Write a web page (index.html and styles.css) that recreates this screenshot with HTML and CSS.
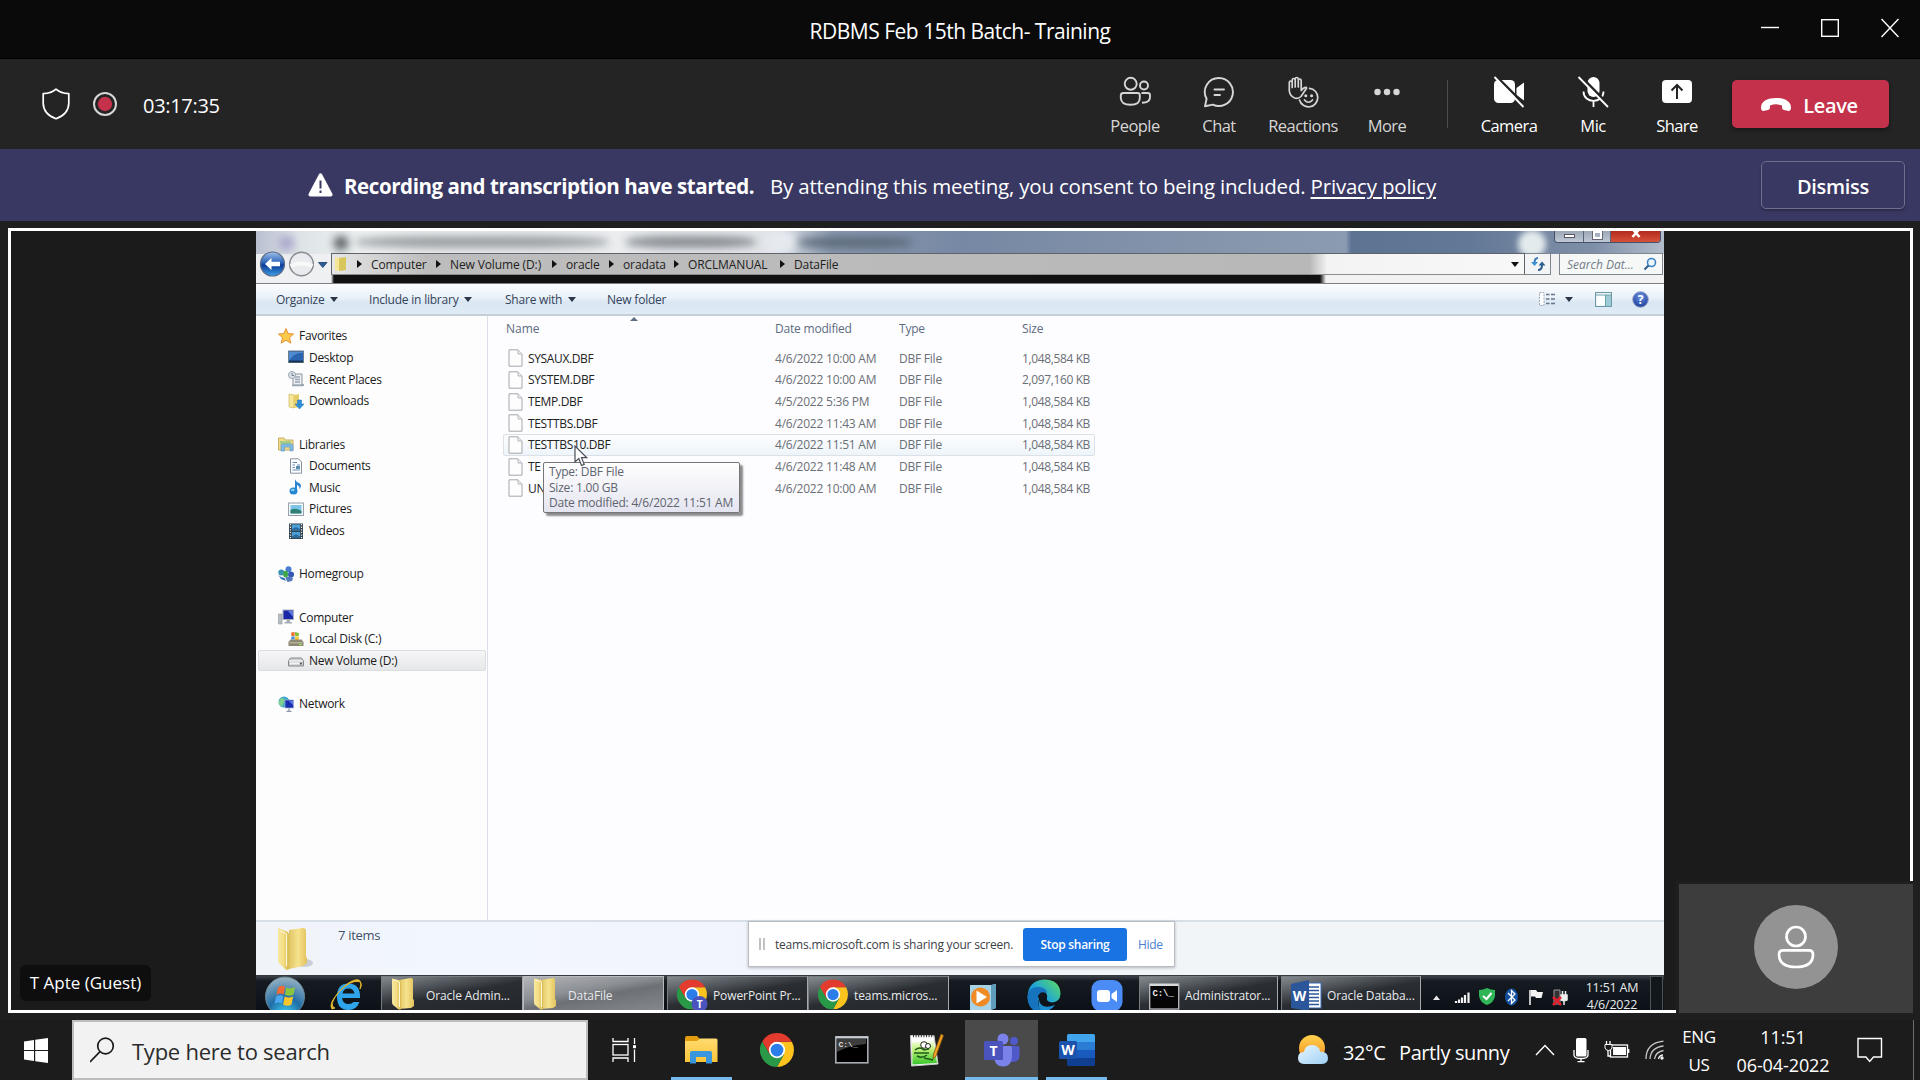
FILE: index.html
```html
<!DOCTYPE html>
<html lang="en">
<head>
<meta charset="utf-8">
<title>RDBMS Feb 15th Batch- Training</title>
<link rel="stylesheet" href="styles.css">
</head>
<body>
<svg class="defs" width="0" height="0" aria-hidden="true">
  <defs>
    <linearGradient id="gFold" x1="0" x2="1"><stop offset="0" stop-color="#f7e9a0"/><stop offset=".5" stop-color="#f3dc84"/><stop offset="1" stop-color="#d9b94e"/></linearGradient>
    <linearGradient id="gFold2" x1="0" x2="1"><stop offset="0" stop-color="#e0c463"/><stop offset=".5" stop-color="#f6e28e"/><stop offset="1" stop-color="#e3c25c"/></linearGradient>
    <radialGradient id="gOrb" cx=".5" cy=".95" r=".95"><stop offset="0" stop-color="#3fd0f4"/><stop offset=".45" stop-color="#1f6ea8"/><stop offset="1" stop-color="#9db4c2"/></radialGradient>
    <radialGradient id="gHelp" cx=".5" cy=".3" r=".8"><stop offset="0" stop-color="#6d92e6"/><stop offset="1" stop-color="#12318f"/></radialGradient>
    <linearGradient id="gBack" x1="0" x2="0" y1="0" y2="1"><stop offset="0" stop-color="#9fc0ea"/><stop offset=".45" stop-color="#2a62b8"/><stop offset=".55" stop-color="#0d3c96"/><stop offset="1" stop-color="#3ba0e8"/></linearGradient>
    <linearGradient id="gEdge" x1="0" y1="1" x2="1" y2="0"><stop offset="0" stop-color="#0c59a4"/><stop offset=".5" stop-color="#1fa3d8"/><stop offset="1" stop-color="#5ee05a"/></linearGradient>
    <linearGradient id="gSun" x1="0" x2="0" y1="0" y2="1"><stop offset="0" stop-color="#ffd34e"/><stop offset="1" stop-color="#f28a1c"/></linearGradient>
    <linearGradient id="gCloud" x1="0" x2="1" y1="0" y2="1"><stop offset="0" stop-color="#e8f6ff"/><stop offset="1" stop-color="#9fd0f5"/></linearGradient>
    <linearGradient id="gExp" x1="0" x2="0" y1="0" y2="1"><stop offset="0" stop-color="#ffdb70"/><stop offset="1" stop-color="#fbc437"/></linearGradient>
    <linearGradient id="gNpp" x1="0" x2="0" y1="0" y2="1"><stop offset="0" stop-color="#f4ffe8"/><stop offset=".35" stop-color="#c4f07a"/><stop offset="1" stop-color="#35c52a"/></linearGradient>
    <symbol id="chrome" viewBox="0 0 48 48">
      <path d="M24 12.500H45A24 24 0 0 1 24 48L34 29.500z" fill="#fcc31e"/>
      <path d="M3.200 12 14 30 24 35 34.200 29.500 24 48A24 24 0 0 1 3.200 12z" fill="#2a9947"/>
      <path d="M24 12.500H45A24 24 0 0 0 3.200 12L14 30z" fill="#e33b2e"/>
      <circle cx="24" cy="24" r="11.500" fill="#fff"/><circle cx="24" cy="24" r="9" fill="#2b7de9"/>
    </symbol>
    <symbol id="folder" viewBox="0 0 24 34">
      <path d="M8 3 20 1q2 0 2 2V22l1 1v6l-3 2-12 1z" fill="url(#gFold2)"/>
      <path d="M1 1.500 8 3q2 .5 2 3V32q-1 1.500-3 0L2 28Q1 27 1 25z" fill="url(#gFold)"/>
      <path d="M3 3 8.500 5v25" fill="none" stroke="#fdf8d8" stroke-width="1"/>
    </symbol>
    <symbol id="file" viewBox="0 0 15 18"><path d="M1 .8H10L14 5V17.200H1z" fill="#fdfdfd" stroke="#a3a7aa"/><path d="M10 1V5H14" fill="#eee" stroke="#b5b8ba"/></symbol>
    <symbol id="word" viewBox="0 0 36 34">
      <path d="M8 2.500Q8 1 9.500 1H34.500Q36 1 36 2.500V9H8z" fill="#41a5ee"/><path d="M8 9H36V17H8z" fill="#2b7cd3"/><path d="M8 17H36V25H8z" fill="#185abd"/><path d="M8 25H36V31.500Q36 33 34.500 33H9.500Q8 33 8 31.500z" fill="#103f91"/>
      <rect x="0" y="8" width="18" height="18" rx="1.500" fill="#1b52ac"/>
      <text x="9" y="22" text-anchor="middle" class="logo-letter">W</text>
    </symbol>
  </defs>
</svg>

<header class="titlebar">
  <h1 class="title">RDBMS Feb 15th Batch- Training</h1>
  <div class="win-controls">
    <svg width="18" height="20" viewBox="0 0 18 20"><path d="M0 9.500H18" stroke="#fff" stroke-width="1.400"/></svg>
    <svg width="18" height="20" viewBox="0 0 18 20"><rect x=".7" y="1.700" width="16.600" height="16.600" fill="none" stroke="#fff" stroke-width="1.400"/></svg>
    <svg width="18" height="20" viewBox="0 0 18 20"><path d="M.5 1 17.500 19M17.500 1 .5 19" stroke="#fff" stroke-width="1.400"/></svg>
  </div>
</header>

<section class="meetbar">
  <svg class="shield" width="28" height="32" viewBox="0 0 28 32"><path d="M14 1.200C10.500 4.300 6.500 5.500 1.200 5.700V15C1.200 22.500 6 27.800 14 30.800 22 27.800 26.800 22.500 26.800 15V5.700C21.500 5.500 17.500 4.300 14 1.200z" fill="none" stroke="#fff" stroke-width="1.700" stroke-linejoin="round"/></svg>
  <svg class="rec" width="24" height="24" viewBox="0 0 24 24"><circle cx="12" cy="12" r="11" fill="none" stroke="#d6d6d6" stroke-width="2"/><circle cx="12" cy="12" r="7.200" fill="#c4314b"/></svg>
  <span class="timer">03:17:35</span>
  <div class="actions">
    <div class="action">
      <svg width="32" height="32" viewBox="0 0 32 32" fill="none" stroke="#d6d6d6" stroke-width="1.900"><circle cx="11.700" cy="7.800" r="6"/><circle cx="25" cy="9.500" r="4"/><path d="M4.500 17H18.500Q20.800 17 20.800 19.300V22Q20.800 28.800 11.500 28.800T1.800 22V19.500Q1.800 17 4.500 17z"/><path d="M22.500 17H28.500Q31 17 31 19.300V21Q31 26.800 23 26.800"/></svg>
      <span>People</span>
    </div>
    <div class="action">
      <svg width="32" height="32" viewBox="0 0 32 32" fill="none" stroke="#d6d6d6" stroke-width="1.900"><path d="M16 2A14 14 0 1 1 9.800 28.600L2 30.200 3.600 22.800A14 14 0 0 1 16 2z" stroke-linejoin="round"/><path d="M11.500 13.500H21M11.500 19H17" stroke-linecap="round"/></svg>
      <span>Chat</span>
    </div>
    <div class="action">
      <svg width="32" height="32" viewBox="0 0 32 32" fill="none" stroke="#d6d6d6" stroke-width="1.700" stroke-linecap="round" stroke-linejoin="round"><path d="M7.500 22Q3 20 2.300 15V6.500Q2.300 5 3.700 5T5.200 6.500V11.500 4Q5.200 2.500 6.600 2.500T8.200 4V11 3Q8.200 1.500 9.700 1.500T11.300 3V11 4.500Q11.300 3 12.700 3T14.200 4.500V14.500Q16.500 11 19.300 11.300 20 12 18.500 13.800L14 20.500Q11.500 23 7.500 22z"/><path d="M22.500 12.300A9.300 9.300 0 1 1 12.500 24"/><path d="M17.500 24q4 4.500 8 0"/><circle cx="18.800" cy="19.800" r=".7" fill="#d6d6d6"/><circle cx="24.600" cy="19.800" r=".7" fill="#d6d6d6"/></svg>
      <span>Reactions</span>
    </div>
    <div class="action">
      <svg width="32" height="32" viewBox="0 0 32 32" fill="#d6d6d6"><circle cx="6.500" cy="16" r="3.200"/><circle cx="16" cy="16" r="3.200"/><circle cx="25.500" cy="16" r="3.200"/></svg>
      <span>More</span>
    </div>
    <i class="divider"></i>
    <div class="action on">
      <svg width="32" height="32" viewBox="0 0 32 32"><rect x="1" y="4" width="21" height="23" rx="4.500" fill="#fff"/><path d="M23.500 12 31 6.500V24.500L23.500 19z" fill="#fff"/><path d="M3 0 33 30" stroke="#242424" stroke-width="2.500"/><path d="M1.500 1 30.500 31" stroke="#fff" stroke-width="1.800"/></svg>
      <span>Camera</span>
    </div>
    <div class="action on">
      <svg width="32" height="32" viewBox="0 0 32 32"><rect x="10.500" y="1" width="12" height="20" rx="6" fill="#fff"/><path d="M6.500 15.500C6.500 28 26.500 28 26.500 15.500M16.500 25V31" fill="none" stroke="#fff" stroke-width="1.800"/><path d="M3.500 0 32 29" stroke="#242424" stroke-width="2.500"/><path d="M1.500 1 31 31" stroke="#fff" stroke-width="1.800"/></svg>
      <span>Mic</span>
    </div>
    <div class="action on">
      <svg width="32" height="32" viewBox="0 0 32 32"><rect x="1" y="4" width="30" height="23" rx="4" fill="#fff"/><path d="M16 23V9.500M10.500 14.500 16 9 21.500 14.500" fill="none" stroke="#242424" stroke-width="2"/></svg>
      <span>Share</span>
    </div>
    <button class="leave">
      <svg width="30" height="14" viewBox="0 0 30 14"><path d="M0 9.500C0 3 7 0 15 0S30 3 30 9.500Q30 13.600 26.500 12.800L23 12Q21 11.500 21 9.500V7.500Q15 5 9 7.500V9.500Q9 11.500 7 12L3.500 12.800Q0 13.600 0 9.500z" fill="#fff"/></svg>
      <span>Leave</span>
    </button>
  </div>
</section>

<section class="banner">
  <div class="notice">
    <svg width="25" height="24" viewBox="0 0 25 24"><path d="M10.800 1.500Q12.500-1 14.200 1.500L24.200 20.500Q25.500 23.500 22.500 23.500H2.500Q-.5 23.500.8 20.500z" fill="#fff"/><path d="M12.500 7.500V15.500M12.500 17.500V20" stroke="#393863" stroke-width="2"/></svg>
    <b>Recording and transcription have started.</b>
    <span class="consent">By attending this meeting, you consent to being included. <a>Privacy policy</a></span>
  </div>
  <button class="dismiss">Dismiss</button>
</section>

<main class="stage">
  <div class="frame">
    <div class="screen">
      <div class="glass">
        <div class="blurs">
          <i class="smudge s1"></i><i class="smudge s2"></i><i class="smudge s3"></i><i class="smudge s4"></i><i class="smudge s5"></i><i class="smudge s6"></i><i class="smudge s7"></i>
        </div>
        <div class="captions"><i class="cap cmin"><b></b></i><i class="cap cmax"><b></b></i><i class="cap cx"><svg width="12" height="7" viewBox="0 0 12 7"><path d="M2.500-2 9.500 6M9.500-2 2.500 6" stroke="#fff" stroke-width="2.600"/></svg></i></div>
        <div class="addr-row">
          <svg class="nav" width="74" height="28" viewBox="0 0 74 28"><circle cx="16.500" cy="14" r="12" fill="url(#gBack)" stroke="#5a6b88" stroke-width="1.200"/><path d="M9 14 15.500 8V11.800H24V16.200H15.500V20z" fill="#fff"/><circle cx="45.500" cy="14" r="11.800" fill="#e9ebee" stroke="#8a8d92" stroke-width="1.500"/><path d="M34.500 16q11-5 22 0" fill="none" stroke="#f8f8f8" stroke-width="4"/><path d="M62.500 12.500H71L66.800 17.500z" fill="#2a5f9a" stroke="#1c3c66" stroke-width=".8"/></svg>
          <div class="address">
            <svg width="13" height="16" viewBox="0 0 13 16"><path d="M1 1 5 2V15L1 14z" fill="#f5e69a"/><path d="M5 2 12 1V14L5 15z" fill="#d9c65c"/></svg>
            <i class="sep"></i><span class="c1">Computer</span><i class="sep"></i><span class="c2">New Volume (D:)</span><i class="sep"></i><span class="c3">oracle</span><i class="sep"></i><span class="c4">oradata</span><i class="sep"></i><span class="c5">ORCLMANUAL</span><i class="sep"></i><span>DataFile</span>
            <i class="drop"></i>
          </div>
          <div class="refresh"><svg width="16" height="16" viewBox="0 0 16 16" fill="none" stroke="#3b77b8" stroke-width="2"><path d="M8 2Q4.500 2 4.500 7"/><path d="M1 6H8L4.500 10z" fill="#3b8fd0" stroke="none"/><path d="M8 14Q12 14 12 9" stroke="#2c5f8f"/><path d="M8.500 9.500 12 5.500 15.500 9.500z" fill="#2c5f8f" stroke="none"/></svg></div>
          <div class="search"><em>Search Dat...</em><svg width="14" height="14" viewBox="0 0 14 14"><circle cx="8.500" cy="5.500" r="4" fill="#eaf5ff" stroke="#3f84c0" stroke-width="1.600"/><path d="M5.500 8.500 1.500 12.500" stroke="#2e5c8c" stroke-width="2"/></svg></div>
        </div>
      </div>
      <div class="toolbar">
        <span class="t1">Organize<i class="drop"></i></span><span class="t2">Include in library<i class="drop"></i></span><span class="t3">Share with<i class="drop"></i></span><span>New folder</span>
        <div class="tools">
          <svg width="17" height="14" viewBox="0 0 17 14"><path d="M.5.5H5V13.500H.5z" fill="#fff" stroke="#9aa5b3" stroke-dasharray="2 1.200"/><path d="M7 2.500H10.500M7 7H10.500M7 11.500H10.500M12 2.500H16M12 7H16M12 11.500H16" stroke="#65748a" stroke-width="1.300"/></svg>
          <i class="drop"></i>
          <svg width="17" height="15" viewBox="0 0 17 15"><rect x=".6" y=".6" width="15.800" height="13.800" fill="#fdfefe" stroke="#5c8f9d"/><path d="M11 3H16V14H11z" fill="#9ccbd6"/><path d="M1 3H16M10.500 3V14" stroke="#6fa0ad"/></svg>
          <svg width="17" height="17" viewBox="0 0 17 17"><circle cx="8.500" cy="8.500" r="7.800" fill="url(#gHelp)" stroke="#9aa7c6"/><text x="8.500" y="13" text-anchor="middle" class="qmark">?</text></svg>
        </div>
      </div>
      <div class="explorer">
        <nav class="tree">
          <div class="node top"><svg width="16" height="16" viewBox="0 0 16 16"><path d="M8 .5 10.200 5.600 15.600 6 11.500 9.700 12.800 15.200 8 12.200 3.200 15.200 4.500 9.700.4 6 5.800 5.600z" fill="#fdc94a" stroke="#e08a2c" stroke-width=".9"/></svg>Favorites</div>
          <div class="node"><svg width="16" height="16" viewBox="0 0 16 16"><rect x=".5" y="2" width="15" height="11.500" fill="#2b64b0" stroke="#6f7f92"/><path d="M1 12Q6 3 15 4V3H1z" fill="#4f8bd0"/><path d="M1 12.500H15" stroke="#17304f" stroke-width="1.800"/></svg>Desktop</div>
          <div class="node"><svg width="16" height="16" viewBox="0 0 16 16"><path d="M5 3H14V14H16H5z" fill="#eef1f4" stroke="#8a939c"/><path d="M7 6H12M7 8.500H12M7 11H12M4 14.500H15" stroke="#9aa7b5" stroke-width="1.400"/><circle cx="4" cy="4" r="3.500" fill="#dde6ec" stroke="#98a4ad"/><path d="M4 2V4.500H6" fill="none" stroke="#6b7b8a"/></svg>Recent Places</div>
          <div class="node"><svg width="16" height="16" viewBox="0 0 16 16"><path d="M1 1 6 2V15L1 14z" fill="#f5e69a" stroke="#c9b04f" stroke-width=".6"/><path d="M6 2 11 1V14L6 15z" fill="#e6cd68"/><path d="M9.500 7H13.500V11H16L11.500 16 7 11H9.500z" fill="#2f8fd8" stroke="#1f6fb0" stroke-width=".5"/></svg>Downloads</div>
          <div class="gap"></div>
          <div class="node top"><svg width="16" height="16" viewBox="0 0 16 16"><path d="M.5 2H6L7.500 4H15V14H.5z" fill="#f0d98a" stroke="#c9b266"/><path d="M2 5H13V8H2z" fill="#a5cf87"/><path d="M3 15V9.500Q3 8 4.500 8H13.500Q15 8 15 9.500V15H12V11H6.500V15z" fill="#82bce6" stroke="#5d93bd" stroke-width=".6"/></svg>Libraries</div>
          <div class="node"><svg width="16" height="16" viewBox="0 0 16 16"><path d="M2.500.8H10.500L13.500 4V15.200H2.500z" fill="#fff" stroke="#8792a0"/><path d="M4.500 4.500H9M4.500 7H7M9 7H12M4.500 9.500H7M4.500 12H12" stroke="#5e90c0" stroke-width="1.200"/><path d="M8 8H12V11H8z" fill="#5b8fae"/></svg>Documents</div>
          <div class="node"><svg width="16" height="16" viewBox="0 0 16 16"><path d="M7 .5Q8 3 12 4.500 14 7 11.500 10.500 12 7 9 6V12.500H7z" fill="#2b85d0"/><ellipse cx="5.500" cy="12" rx="4" ry="3.500" fill="#2286d0"/><ellipse cx="4.800" cy="11" rx="1.800" ry="1.200" fill="#8ccdf2"/></svg>Music</div>
          <div class="node"><svg width="16" height="16" viewBox="0 0 16 16"><rect x=".6" y="2" width="14.800" height="12.500" fill="#fff" stroke="#8e9aa5"/><path d="M2.500 4H13.500V12.500H2.500z" fill="#7cc5e8"/><path d="M2.500 9Q7 6 13.500 10V12.500H2.500z" fill="#2f7f74"/></svg>Pictures</div>
          <div class="node"><svg width="16" height="16" viewBox="0 0 16 16"><rect x="1" y=".5" width="14" height="15.500" fill="#33424c"/><path d="M4 1.500H12V7.500H4zM4 9H12V15H4z" fill="#4fa1dc"/><path d="M4 6 8 4 12 6V7.500H4zM4 13.500 8 11 12 13.500V15H4z" fill="#2a6a9c"/><path d="M2.500 1V16M13.500 1V16" stroke="#dfe6ea" stroke-width="1.300" stroke-dasharray="1.300 1.300"/></svg>Videos</div>
          <div class="gap"></div>
          <div class="node top"><svg width="16" height="16" viewBox="0 0 16 16"><circle cx="10.500" cy="3.200" r="3" fill="#4a7cd0"/><circle cx="3.300" cy="6.500" r="3" fill="#3a93ae"/><circle cx="13" cy="8.500" r="3" fill="#3558b5"/><path d="M5 9Q5 4 9 5L10.500 8 9 12 6 11z" fill="#3fa64a"/><path d="M.5 9Q3 12 6.500 12L8 15 3 13z" fill="#306dba"/><path d="M7.500 12Q11 9 15 12L14 15 9.500 16z" fill="#5678bd"/></svg>Homegroup</div>
          <div class="gap"></div>
          <div class="node top"><svg width="16" height="16" viewBox="0 0 16 16"><rect x="5" y="1" width="10.500" height="9.500" fill="#1a28a8" stroke="#a9b2bc"/><path d="M10 2 15 8V2z" fill="#5a76e0"/><path d="M.5 5H4V15H.5z" fill="#b7bec5" stroke="#8d949a" stroke-width=".6"/><path d="M8.500 11H12V13H14V14.500H6.500V13H8.500z" fill="#a7adb3"/></svg>Computer</div>
          <div class="node"><svg width="16" height="16" viewBox="0 0 16 17"><path d="M3 1.500 6.500 1V5L3 5.500z" fill="#ee6b2a"/><path d="M7 1 11 2V5.500L7 5z" fill="#7cbf3a"/><path d="M3 6 6.500 5.500V9H3z" fill="#3f8fe0"/><path d="M7 5.500 11 6V10H7z" fill="#fbc62e"/><path d="M2 9H14L16 12V16H0V12z" fill="#8f8a76"/><path d="M1 12.500H15" stroke="#c9c5b0"/><path d="M11 14.300H14" stroke="#8fe04a" stroke-width="1.500"/></svg>Local Disk (C:)</div>
          <div class="node sel"><svg width="16" height="16" viewBox="0 0 16 16"><path d="M2.500 6H13.500L15.500 9V14H.5V9z" fill="#cfd1d3" stroke="#85888b"/><path d="M1 9H15" stroke="#fff"/><path d="M2 11.500H11" stroke="#f5f5f5" stroke-width="1.500"/><path d="M12 11.500H14" stroke="#666" stroke-width="2"/></svg>New Volume (D:)</div>
          <div class="gap"></div>
          <div class="node top"><svg width="16" height="16" viewBox="0 0 16 16"><circle cx="6" cy="6" r="5.500" fill="#3fa7cf"/><path d="M3 2Q8 2 6 6T5 11Q0 9 1 5z" fill="#7fd08a"/><rect x="7" y="4" width="8.500" height="8" fill="#1a2eb0" stroke="#9eb0d2" stroke-width=".7"/><path d="M11 5 15 9V5z" fill="#5e7ce4"/><path d="M11 12.500V15M8.500 15.300H13.500" stroke="#8c98a8" stroke-width="1.300"/></svg>Network</div>
        </nav>
        <section class="files">
          <div class="row head"><span class="name">Name</span><span>Date modified</span><span>Type</span><span>Size</span><i class="sort"></i></div>
          <div class="row"><svg><use href="#file"/></svg><span class="name">SYSAUX.DBF</span><span>4/6/2022 10:00 AM</span><span>DBF File</span><span class="size">1,048,584 KB</span></div>
          <div class="row"><svg><use href="#file"/></svg><span class="name">SYSTEM.DBF</span><span>4/6/2022 10:00 AM</span><span>DBF File</span><span class="size">2,097,160 KB</span></div>
          <div class="row"><svg><use href="#file"/></svg><span class="name">TEMP.DBF</span><span>4/5/2022 5:36 PM</span><span>DBF File</span><span class="size">1,048,584 KB</span></div>
          <div class="row"><svg><use href="#file"/></svg><span class="name">TESTTBS.DBF</span><span>4/6/2022 11:43 AM</span><span>DBF File</span><span class="size">1,048,584 KB</span></div>
          <div class="row hover"><svg><use href="#file"/></svg><span class="name">TESTTBS10.DBF</span><span>4/6/2022 11:51 AM</span><span>DBF File</span><span class="size">1,048,584 KB</span></div>
          <div class="row"><svg><use href="#file"/></svg><span class="name">TE</span><span>4/6/2022 11:48 AM</span><span>DBF File</span><span class="size">1,048,584 KB</span></div>
          <div class="row"><svg><use href="#file"/></svg><span class="name">UN</span><span>4/6/2022 10:00 AM</span><span>DBF File</span><span class="size">1,048,584 KB</span></div>
          <div class="tooltip"><span>Type: DBF File</span><span>Size: 1.00 GB</span><span>Date modified: 4/6/2022 11:51 AM</span></div>
          <svg class="cursor" width="14" height="22" viewBox="0 0 14 22"><path d="M1 1V17L4.800 13.500 7.500 20.500 10.200 19.400 7.500 12.700H12.800z" fill="#fff" stroke="#4a4f57" stroke-width="1.200"/></svg>
        </section>
      </div>
      <div class="details">
        <svg width="36" height="46" viewBox="0 0 36 46"><ellipse cx="28" cy="37" rx="8" ry="4" fill="#c9ced6"/><path d="M12 4 26 2q3 0 3 3V30l1 2v5l-4 3-14 3z" fill="url(#gFold2)"/><path d="M1 2 9 5q3 1 3 4V43q-2 2-4 0L3 38Q1 37 1 34z" fill="url(#gFold)"/><path d="M3 5 9.500 8v32" fill="none" stroke="#fdf8d8"/></svg>
        <span>7 items</span>
        <div class="sharebar"><i class="grip"></i><span class="msg">teams.microsoft.com is sharing your screen.</span><b>Stop sharing</b><a>Hide</a></div>
      </div>
      <div class="w7bar">
        <svg class="orb" width="42" height="35" viewBox="0 0 42 35"><circle cx="21" cy="20.500" r="19.500" fill="url(#gOrb)" stroke="#6a8594"/><path d="M14 11.500Q17.500 8.500 21 11L19.500 18.500Q16 16.500 12.500 19z" fill="#ef6a34"/><path d="M22.300 11.500Q26.500 13.500 31 11L29.500 18.500Q25.500 21 21 18.800z" fill="#8cc63e"/><path d="M12 20.500Q15.800 18 19.300 20.200L18 27.500Q14.500 25.500 10.500 28z" fill="#4aa8f0"/><path d="M20.600 20.500Q25.300 22.500 29.200 20.200L27.500 28.500Q23.500 31 19.200 28.500z" fill="#fbc52d"/></svg>
        <svg class="ie" width="36" height="35" viewBox="0 0 36 35"><path d="M31 22H13Q14 28 19.500 28 23 28 24.500 26H30.500Q27.500 34 19.500 34 8 34 8 20.500 8 7.500 19.500 7.500 31.500 7.500 31 22zM13.500 17.500H25.500Q24.500 12.500 19.500 12.500T13.500 17.500z" fill="#2fa4ea"/><path d="M3 33Q-1 28 10 16T30 5.500Q34 7 31 13 34 2 26 4T9 17Q-1 30 6 32z" fill="#f0c53a" stroke="#e0b32e"/></svg>
        <div class="w7btn b1"><svg width="24" height="34"><use href="#folder"/></svg><span>Oracle Admin...</span></div>
        <div class="w7btn b2"><svg width="24" height="34"><use href="#folder"/></svg><span>DataFile</span></div>
        <div class="w7btn b3"><svg width="31" height="34" viewBox="0 0 31 34"><use href="#chrome" x="0" y="2.500" width="30" height="30"/><circle cx="22.500" cy="27" r="8" fill="#4b53bc"/><text x="22.500" y="31" text-anchor="middle" class="badge-t">T</text></svg><span>PowerPoint Pr...</span></div>
        <div class="w7btn b4"><svg width="31" height="34" viewBox="0 0 31 34"><use href="#chrome" x="0" y="2.500" width="30" height="30"/></svg><span>teams.micros...</span></div>
        <div class="plain">
          <svg width="28" height="35" viewBox="0 0 28 35"><path d="M1 9H22L27 8V32L22 34H1z" fill="#a8d2e6"/><path d="M22 9 27 8V32L22 34z" fill="#5e9dbb"/><circle cx="11.500" cy="21" r="9.500" fill="#f08a24"/><path d="M7.500 14.500 18 21 7.500 27.500z" fill="#fff"/></svg>
          <svg width="34" height="35" viewBox="0 0 34 35"><path d="M33.500 18Q33 3.500 17 3.500 1 4.500.5 21 1 35 14 37 9 30 12 23 8 16 15 15.500 21 16 20 22 19 26 25 26.500 33 26 33.500 18z" fill="url(#gEdge)"/><path d="M.5 21Q2 10 12 11 20 12 20 17 12 14 10.500 22 10 30 15 36H10Q1 32 .5 21z" fill="#1673bd"/><path d="M12 24Q14 34 28 29 24 35 15 36 10 30 12 24z" fill="#1a8ed0"/></svg>
          <svg width="32" height="35" viewBox="0 0 32 35"><rect x=".5" y="4" width="31" height="31" rx="9" fill="#4a8bf5"/><rect x="6" y="14" width="13" height="12" rx="3" fill="#fff"/><path d="M20.500 18 26 14V26L20.500 22z" fill="#fff"/></svg>
        </div>
        <div class="w7btn b5"><svg width="31" height="34" viewBox="0 0 31 34"><rect x=".7" y="7" width="29" height="25" fill="#050505" stroke="#b9bcc0" stroke-width="1.300"/><path d="M1 8H29" stroke="#d6d8da" stroke-width="2"/><text x="3.500" y="19" class="cmd-t">C:\_</text></svg><span>Administrator...</span></div>
        <div class="w7btn b6"><svg width="31" height="34" viewBox="0 0 31 34"><rect x="12" y="6" width="18" height="25" fill="#fff" stroke="#3a68b5"/><path d="M17 10H28M17 13.500H28M17 17H28M17 20.500H28M17 24H28M17 27.500H28" stroke="#2b579a" stroke-width="1.300"/><path d="M0 7 18 3V34L0 31z" fill="#2b579a"/><text x="8.500" y="24" text-anchor="middle" class="w-t">W</text></svg><span>Oracle Databa...</span></div>
        <div class="tray">
          <svg width="142" height="35" viewBox="0 0 142 35">
            <path d="M1 24H8L4.500 19.500z" fill="#e8e8e8"/>
            <path d="M24 27V25M27 27V23.500M30 27V21.500M33 27V19M36.500 27V16.500" stroke="#f2f2f2" stroke-width="2.200"/>
            <path d="M47 14Q51 14 55 12 59 14 63 14V20Q62 26.500 55 29 48 26.500 47 20z" fill="#2fb457"/><path d="M51 20 54.500 23 59.500 17" fill="none" stroke="#fff" stroke-width="2"/>
            <ellipse cx="79.500" cy="21" rx="6.500" ry="8.500" fill="#1450a0"/><path d="M76 17 83 24 79.500 27.500V14.500L83 18 76 25" fill="none" stroke="#fff" stroke-width="1.300"/>
            <path d="M98 14V29" stroke="#eee" stroke-width="1.600"/><path d="M99 14H104L105.500 16H111L109.500 22H104L103 20.500H99z" fill="#f4f4f4"/>
            <path d="M122 14H128V28H122z" fill="#333" stroke="#999"/><path d="M129 19H135V24Q132 26 129 24zM130.500 15V19M133.500 15V19M132 24V29" stroke="#eee" fill="#eee" stroke-width="1.500"/><path d="M121 21 129 29M129 21 121 29" stroke="#e0202c" stroke-width="2.500"/>
          </svg>
          <div class="w7clock"><span>11:51 AM</span><span>4/6/2022</span></div>
          <i class="peek"></i>
        </div>
      </div>
    </div>
    <span class="guest">T Apte (Guest)</span>
  </div>
  <div class="self">
    <div class="avatar"><svg width="38" height="44" viewBox="0 0 38 44" fill="none" stroke="#fff" stroke-width="2.700"><circle cx="19" cy="11.500" r="9.500"/><path d="M6 25.300H32Q36 25.300 36 29.500 36 42 19 42T2 29.500Q2 25.300 6 25.300z"/></svg></div>
  </div>
</main>

<footer class="taskbar">
  <svg class="start" width="24" height="25" viewBox="0 0 24 25"><path d="M0 3.500 10 2V12H0zM11.200 1.800 24 0V12H11.200zM0 13H10V23L0 21.500zM11.200 13H24V25L11.200 23.200z" fill="#fff"/></svg>
  <div class="searchbox"><svg width="26" height="26" viewBox="0 0 26 26" fill="none" stroke="#1b1b1b" stroke-width="1.700"><circle cx="15.500" cy="9" r="7.800"/><path d="M10 14.700 0 25"/></svg><span>Type here to search</span></div>
  <div class="tb view"><svg width="26" height="26" viewBox="0 0 26 26" fill="none" stroke="#fff" stroke-width="1.300"><path d="M1 1V4.500H16V1M1 25V21H16V25"/><rect x="1" y="7.500" width="15" height="10.500"/><path d="M22.500 1V7M22.500 12.500V25"/><path d="M21 8.200H24V11.200H21z" fill="#fff" stroke="none"/></svg></div>
  <div class="tb open"><svg width="33" height="28" viewBox="0 0 33 28"><path d="M0 2Q0 0 2 0H12L15 3H30V8H0z" fill="#e39b0e"/><path d="M0 5H12L15 2.500H31Q32.500 2.500 32.500 4V26H0z" fill="url(#gExp)"/><path d="M5 27.500V17Q5 15 7 15H25Q27 15 27 17V27.500H21V21H11V27.500z" fill="#3a96dd"/></svg></div>
  <div class="tb"><svg width="34" height="34"><use href="#chrome"/></svg></div>
  <div class="tb"><svg width="34" height="28" viewBox="0 0 34 28"><rect x=".8" y=".8" width="32" height="26" fill="#000" stroke="#a9adb2" stroke-width="1.600"/><path d="M2 3H31V8Q15 9 2 16z" fill="#3d3d3d"/><path d="M1 1.500H33" stroke="#c6ccd4" stroke-width="2"/><text x="3.500" y="10.500" class="cmd-s">C:\_</text></svg></div>
  <div class="tb"><svg width="36" height="34" viewBox="0 0 36 34"><path d="M1.500 2.500 25 2.500 29 31 2.500 33z" fill="#fdfdfd" stroke="#c9c9c9"/><path d="M3 9 25 8 28 30 3.500 31.500z" fill="url(#gNpp)"/><path d="M4 3H25" stroke="#333" stroke-width="2.500" stroke-dasharray="1 1.600"/><circle cx="15" cy="12" r="3.300" fill="#fff" stroke="#222"/><circle cx="19" cy="13" r="2.500" fill="#fff" stroke="#222"/><path d="M6 17Q11 13 15 17L20 16M5 20H20M8 23Q13 26 18 22M15 25 24 27" fill="none" stroke="#1b5d18" stroke-width="1.500"/><path d="M32 1 34.500 2.500 27 23 24 26 24.500 21z" fill="#f0a021" stroke="#7b4a10" stroke-width=".7"/></svg></div>
  <div class="tb active"><svg width="36" height="34" viewBox="0 0 36 34"><circle cx="30" cy="8" r="4" fill="#5059c9"/><path d="M23 13H34Q35.500 13 35.500 14.500V23Q35 29 29 29 24 29 23 24z" fill="#5059c9"/><circle cx="19" cy="6" r="5.500" fill="#7b83eb"/><path d="M10 13H26.500Q28 13 28 14.500V24Q27.500 33.500 19 33.500T10 24z" fill="#7b83eb"/><rect x="0" y="8" width="19" height="19" rx="1.500" fill="#4b53bc"/><text x="9.500" y="23" text-anchor="middle" class="logo-letter">T</text></svg></div>
  <div class="tb open last"><svg width="36" height="34"><use href="#word"/></svg></div>
  <div class="systray">
    <svg width="32" height="32" viewBox="0 0 32 32"><circle cx="15" cy="14" r="13" fill="url(#gSun)"/><path d="M8 30Q1 30 1 24 1 18 7 18 8 11 15 11 22 11 23 17.500 31 17.500 31 24 31 30 24 30z" fill="url(#gCloud)"/></svg>
    <span class="temp">32°C</span><span class="sky">Partly sunny</span>
    <svg class="up" width="20" height="12" viewBox="0 0 20 12"><path d="M1 11 10 1.500 19 11" fill="none" stroke="#fff" stroke-width="1.400"/></svg>
    <svg class="mic" width="16" height="26" viewBox="0 0 16 26"><rect x="3" y="1" width="10.500" height="18.500" rx="1.500" fill="#fff"/><path d="M1 13V18Q1 21.500 8 21.500T15 18V13M8 21.500V25M4.500 24.600H11.500" fill="none" stroke="#fff" stroke-width="1.300"/></svg>
    <svg class="bat" width="26" height="20" viewBox="0 0 26 20"><rect x="6.500" y="5" width="17" height="12" fill="none" stroke="#fff" stroke-width="1.300"/><path d="M9 7H22V15H9z" fill="#fff"/><path d="M24.700 9V13M2.500 1V5M6 1V5M4 10V16H6" stroke="#fff" fill="none" stroke-width="1.300"/><path d="M1 4.500H8V8Q7 10.500 4.500 10.500T1 8z" fill="#1c1c1c" stroke="#fff"/></svg>
    <svg class="wifi" width="19" height="20" viewBox="0 0 19 20" fill="none" stroke="#fff" stroke-width="1.300"><path d="M1 19Q1 3 18.500 1.200M5 19Q5.500 7.500 18.500 6M9.500 19Q10.500 12 18.500 10.500" opacity=".75"/><path d="M13.500 19Q14 15.500 18 14.800"/><circle cx="17" cy="18" r="1" fill="#fff"/></svg>
    <div class="lang"><span>ENG</span><span>US</span></div>
    <div class="clock"><span>11:51</span><span>06-04-2022</span></div>
    <svg class="note" width="26" height="26" viewBox="0 0 26 26"><path d="M1 1.500H24.500V20H16.500L12.700 24.500 9 20H1z" fill="none" stroke="#fff" stroke-width="1.400"/></svg>
    <i class="edge"></i>
  </div>
</footer>
</body>
</html>
```
FILE: styles.css
```css
* { box-sizing: border-box; }
html, body { margin: 0; width: 1920px; height: 1080px; overflow: hidden; }
body { display: flex; flex-direction: column; background: #1f1f1f; color: #fff; font-family: "Open Sans", "Noto Sans", sans-serif; }
svg { display: block; flex: none; }
i { font-style: normal; display: block; flex: none; }
button { font: inherit; color: inherit; border: 0; margin: 0; padding: 0; }
.defs { position: absolute; }
.logo-letter { font: bold 14px "Open Sans", sans-serif; fill: #fff; }

/* window title */
.titlebar { height: 59px; flex: none; background: #0a0a0a; border-bottom: 1px solid #000; display: grid; grid-template-columns: 1fr auto 1fr; align-items: center; }
.title { grid-column: 2; margin: 3px 0 0; font-size: 21px; font-weight: 400; letter-spacing: -.5px; white-space: nowrap; }
.win-controls { display: flex; gap: 42px; justify-self: end; padding-right: 21px; margin-top: -2px; }

/* meeting controls */
.meetbar { height: 90px; flex: none; background: #242424; display: flex; align-items: center; padding: 0 31px 0 42px; }
.rec { margin-left: 23px; }
.timer { margin: 2px 0 0 26px; font-size: 20px; letter-spacing: -.3px; }
.actions { margin-left: auto; display: flex; align-items: center; }
.action { width: 84px; display: flex; flex-direction: column; align-items: center; gap: 6px; color: #d6d6d6; font-size: 16.500px; line-height: 24px; letter-spacing: -.55px; margin-top: 5px; }
.action.on { color: #fff; }
.divider { width: 1px; height: 48px; background: #4d4d4d; margin: 0 19px 0 18px; }
.leave { width: 157px; height: 48px; margin: 0 0 0 13px; border-radius: 5px; background: #c4314b; box-shadow: 0 2px 4px rgba(0,0,0,.4); display: flex; align-items: center; justify-content: center; gap: 12px; font-size: 20px; font-weight: 600; letter-spacing: -.3px; padding: 2px 2px 0 0; }

/* notification */
.banner { height: 72px; flex: none; background: #393863; display: flex; align-items: center; justify-content: space-between; padding: 0 15px 0 308px; }
.notice { display: flex; align-items: center; font-size: 20.500px; white-space: nowrap; }
.notice b { margin: 2px 0 0 11px; width: 426px; font-weight: 700; letter-spacing: -.42px; }
.consent { margin-top: 2px; letter-spacing: -.2px; }
.consent a { text-decoration: underline; text-underline-offset: 3px; }
.dismiss { width: 144px; height: 48px; border: 1px solid #716f8f; border-radius: 5px; background: #393863; box-shadow: 0 2px 3px rgba(0,0,0,.25); font-size: 20px; font-weight: 600; letter-spacing: -.3px; padding-top: 2px; }

/* stage */
.stage { position: relative; height: 799px; flex: none; padding: 7px 7px 7px 8px; background: #1f1f1f; }
.frame { position: relative; height: 785px; border: 3px solid #fff; background: #1b1b1b; padding-left: 245px; }
.guest { position: absolute; left: 9px; bottom: 9px; width: 131px; height: 36px; border-radius: 6px; background: #0e0e0e; font-size: 17px; letter-spacing: 0; line-height: 36px; text-align: center; white-space: nowrap; }
.self { position: absolute; right: 7px; bottom: 7px; width: 237px; height: 132px; border: solid #1f1f1f; border-width: 3px 0 0 3px; background: #3d3d3d; display: flex; align-items: center; justify-content: center; padding-bottom: 3px; }
.avatar { width: 84px; height: 84px; border-radius: 50%; background: #939393; display: flex; align-items: center; justify-content: center; }

/* shared desktop */
.screen { width: 1408px; height: 779px; display: flex; flex-direction: column; overflow: hidden; background: #fdfdff; color: #1b1b1b; font-size: 12px; letter-spacing: -.3px; white-space: nowrap; }
.glass { position: relative; height: 53px; flex: none; overflow: hidden; border-bottom: 1px solid #7e8088; display: flex; flex-direction: column; justify-content: flex-end; padding-bottom: 8px;
  background: linear-gradient(90deg, #b9bfd0, #dde3e6 3%, #eff2f2 8%, #e9ebee 33%, #dfe2e6 37%, #8a99b0 41%, #7788a4 50%, #8898ad 72%, #8b9bb2 77.400%, #5c7392 77.800%, #627896 86%, #7f8fa8 95%, #b2bccb) 0 0 / 100% 23px no-repeat, linear-gradient(90deg, #eef0f1 75px, #111 78px 1064px, #f2f2f2 1070px); }
.smudge { position: absolute; border-radius: 40%; filter: blur(4px); }
.s1 { left: 23px; top: 5px; width: 15px; height: 14px; background: #a9a6cc; }
.s2 { left: 78px; top: 5px; width: 14px; height: 14px; background: #5b5f64; }
.s3 { left: 100px; top: 5px; width: 252px; height: 12px; background: #9a9ea2; }
.s4 { left: 370px; top: 5px; width: 130px; height: 12px; background: #888d93; }
.s5 { left: 510px; top: 0; width: 30px; height: 22px; background: #e6eaf0; }
.s6 { left: 542px; top: 6px; width: 115px; height: 11px; background: #5c6a7a; }
.s7 { left: 1262px; top: -1px; width: 28px; height: 28px; background: #e3ebed; border-radius: 50%; filter: blur(3px); }
.captions { position: absolute; right: 3px; top: 0; height: 12px; display: flex; border: 1px solid #46506a; border-top: 0; border-radius: 0 0 4px 4px; overflow: hidden; }
.cap { height: 12px; width: 29px; background: linear-gradient(#9ba6b6, #c3cbd7); border-right: 1px solid #59647a; display: flex; justify-content: center; align-items: center; }
.cap.cmax { width: 27px; }
.cmin b { width: 11px; height: 4px; background: #fff; border: 1px solid #556; margin-top: -3px; }
.cmax b { width: 9px; height: 8px; border: 2px solid #fff; outline: 1px solid #667; margin-top: -4px; }
.cap.cx { width: 49px; border: 0; background: linear-gradient(#b32a1c, #d9553c); align-items: flex-start; }
.addr-row { position: relative; display: flex; align-items: center; height: 22px; }
.nav { margin: 0 1px 0 0; }
.address { width: 1194px; height: 22px; border: 1px solid #5f636b; border-bottom-color: #8c8c8c; background: linear-gradient(90deg, #e6e6e6, #bdbdbd 8%, #b8b8b8 82%, #f3f3f3 83.500%, #f8f8f8); display: flex; align-items: center; padding: 0 5px 0 2px; color: #222; letter-spacing: -.12px; }
.address .sep { border: 4px solid transparent; border-left: 5px solid #111; border-right: 0; margin: 0 9px 0 10px; }
.c1 { width: 55px; } .c2 { width: 92px; } .c3 { width: 33px; } .c4 { width: 41px; } .c5 { width: 82px; }
.drop { display: inline-block; border: 4px solid transparent; border-top: 5px solid #2b3648; border-bottom: 0; }
.address .drop { margin-left: auto; border-top-color: #111; }
.refresh { width: 26px; height: 22px; border: 1px solid #80868e; border-left: 0; background: #f2f4f5; display: flex; align-items: center; justify-content: center; }
.search { width: 104px; height: 22px; margin-left: 8px; border: 1px solid #80868e; background: #f6f8f8; display: flex; align-items: center; justify-content: space-between; padding: 0 5px 0 7px; color: #737c85; letter-spacing: 0; }
.toolbar { height: 32px; flex: none; display: flex; align-items: center; padding: 0 15px 0 20px; background: linear-gradient(#fbfdfe, #eaf2f9 45%, #dae7f3 60%, #dfebf5); border-bottom: 2px solid #c5ced9; color: #33435a; letter-spacing: -.22px; }
.toolbar .drop { margin-left: 6px; vertical-align: 2px; }
.t1 { width: 93px; } .t2 { width: 136px; } .t3 { width: 102px; }
.tools { margin-left: auto; display: flex; align-items: center; }
.tools .drop { margin: 0 22px 0 9px; }
.tools svg + svg { margin-left: 20px; }
.qmark { font: bold 12px "Open Sans", sans-serif; fill: #fff; }
.explorer { height: 604px; flex: none; display: flex; }
.tree { width: 232px; border-right: 1px solid #dadfe9; padding-top: 9px; background: #fdfdfe; }
.node { height: 21.650px; display: flex; align-items: center; gap: 5px; padding-left: 32px; }
.node.top { padding-left: 22px; }
.node.sel { margin: 0 1px 0 2px; padding-left: 29px; border: 1px solid #dcdde0; border-radius: 2px; background: linear-gradient(#f6f6f8, #e6e7e9); }
.gap { height: 21.650px; }
.files { position: relative; padding: 0 0 0 15px; flex: 1; }
.row { width: 592px; height: 21.650px; display: grid; grid-template-columns: 24px 247px 124px 101px 1fr; align-items: center; color: #6b6f76; border: 1px solid transparent; padding-right: 4px; letter-spacing: -.23px; }
.row svg { width: 15px; height: 18px; margin-left: 4px; }
.row .name { color: #222; letter-spacing: -.36px; }
.row .size { text-align: right; letter-spacing: -.38px; }
.row.head { position: relative; height: 31.500px; grid-template-columns: 1px 270px 124px 123px 1fr; color: #5c6b80; letter-spacing: -.2px; padding-bottom: 6px; }
.row.head .name { grid-column: 1 / 3; padding-left: 2px; color: #5c6b80; letter-spacing: 0; }
.sort { position: absolute; left: 126px; top: 0; border: 4px solid transparent; border-bottom: 4px solid #5b6f86; border-top: 0; }
.row.hover { border-color: #dce1e8; border-radius: 2px; background: linear-gradient(#fcfdfe, #eef5fa); }
.tooltip { position: absolute; left: 55px; top: 146px; width: 197px; height: 51px; border: 1px solid #767676; border-radius: 2px; background: linear-gradient(#fff, #e4e5f0); box-shadow: 3px 3px 2px rgba(0,0,0,.45); padding: 1px 5px; display: flex; flex-direction: column; color: #60646e; line-height: 15.500px; letter-spacing: -.21px; }
.cursor { position: absolute; left: 86px; top: 129px; }
.details { position: relative; height: 55px; flex: none; display: flex; align-items: flex-start; padding: 4px 0 0 21px; gap: 25px; background: linear-gradient(90deg, #f0f4f9, #f2f6fe 15%, #f1f4fb 40%, #f1f5f8 65%); border-top: 2px solid #d9dfe6; color: #3f5068; font-size: 13px; line-height: 19px; }
.sharebar { position: absolute; left: 492px; top: -1px; width: 427px; height: 46px; border: 1px solid #b9bcc2; background: #fff; box-shadow: 0 1px 3px rgba(0,0,0,.25); display: flex; align-items: center; padding-left: 10px; color: #3d4146; font-size: 12px; }
.grip { width: 6px; height: 12px; border: solid #c2c2c2; border-width: 0 2px; }
.msg { width: 258px; flex: none; padding-left: 10px; letter-spacing: -.2px; }
.sharebar b { width: 104px; height: 33px; background: #1a73e2; border-radius: 3px; color: #fff; font-weight: 600; text-align: center; line-height: 33px; }
.sharebar a { margin-left: 11px; color: #4a7fd0; }

.w7bar { position: relative; height: 35px; flex: none; border-top: 1px solid #35383c; background: linear-gradient(#3c4247, #151b20 5px, #0b1117); display: flex; color: #e8eaec; }
.orb { margin-left: 8px; }
.ie { margin-left: 23px; }
.w7btn { height: 35px; width: 141px; border: 1px solid #777c82; border-bottom: 0; border-right-color: #a5a9ae; background: linear-gradient(170deg, #858a8f, #585d63 25%, #2a2e33 50%, #23272c); display: flex; align-items: center; padding-left: 9px; gap: 5px; font-size: 12px; letter-spacing: -.1px; overflow: hidden; }
.w7btn span { margin-top: 2px; }
.b1, .b2 { gap: 11px; }
.b1 { margin-left: 16px; width: 142px; }
.b2 { background: linear-gradient(170deg, #b3b5b9, #8b8e93 40%, #6d7075 55%, #85888d); border-color: #b8babd; }
.b3 { margin-left: 3px; }
.b5 { width: 139px; margin-left: 16px; }
.b6 { width: 140px; margin-left: 3px; }
.badge-t { font: bold 10px "Open Sans", sans-serif; fill: #fff; }
.w-t { font: bold 14px "Open Sans", sans-serif; fill: #fff; }
.cmd-t { font: bold 9px "Liberation Mono", monospace; fill: #eee; }
.cmd-s { font: bold 8px "Liberation Mono", monospace; fill: #ddd; }
.plain { display: flex; gap: 30px; margin-left: 20px; }
.tray { display: flex; margin-left: auto; }
.w7clock { width: 76px; display: flex; flex-direction: column; align-items: center; line-height: 17px; padding-top: 3px; font-size: 12.500px; letter-spacing: -.2px; }
.peek { width: 13px; border: 1px solid #4d5358; border-bottom: 0; margin-right: 1px; background: #11171b; }

/* host taskbar */
.taskbar { height: 60px; flex: none; background: #1c1c1c; display: flex; align-items: center; }
.start { margin-left: 24px; }
.searchbox { width: 516px; height: 60px; margin-left: 24px; border: 2px solid #bdbdbd; background: #f2f2f2; display: flex; align-items: center; gap: 16px; padding: 2px 0 0 16px; color: #2b2b2b; font-size: 22px; letter-spacing: -.25px; }
.searchbox svg { margin-top: -2px; }
.tb { width: 75px; height: 60px; display: flex; align-items: center; justify-content: center; }
.tb.view { width: 76px; padding-right: 3px; }
.tb.open { background: linear-gradient(#76b9ed, #76b9ed) 50% 100% / 61px 3px no-repeat; }
.tb.active { background: linear-gradient(#76b9ed, #76b9ed) 50% 100% / 73px 3px no-repeat, linear-gradient(#4a4a4a, #4a4a4a) 50% 0 / 73px 100% no-repeat; }
.systray { margin-left: auto; display: flex; align-items: center; height: 60px; font-size: 20px; letter-spacing: -.4px; white-space: nowrap; }
.temp { margin: 5px 0 0 14px; width: 56px; }
.sky { margin-top: 5px; width: 136px; }
.mic { margin-left: 18px; } .bat { margin-left: 15px; } .wifi { margin-left: 15px; }
.lang, .clock { display: flex; flex-direction: column; align-items: center; font-size: 17px; line-height: 28px; letter-spacing: -.4px; padding-top: 2px; }
.clock { font-size: 18px; letter-spacing: -.1px; }
.lang { width: 70px; } .clock { width: 98px; }
.note { margin-left: 25px; }
.edge { width: 1px; height: 60px; background: #6b6b6b; margin: 0 6px 0 30px; }
```
